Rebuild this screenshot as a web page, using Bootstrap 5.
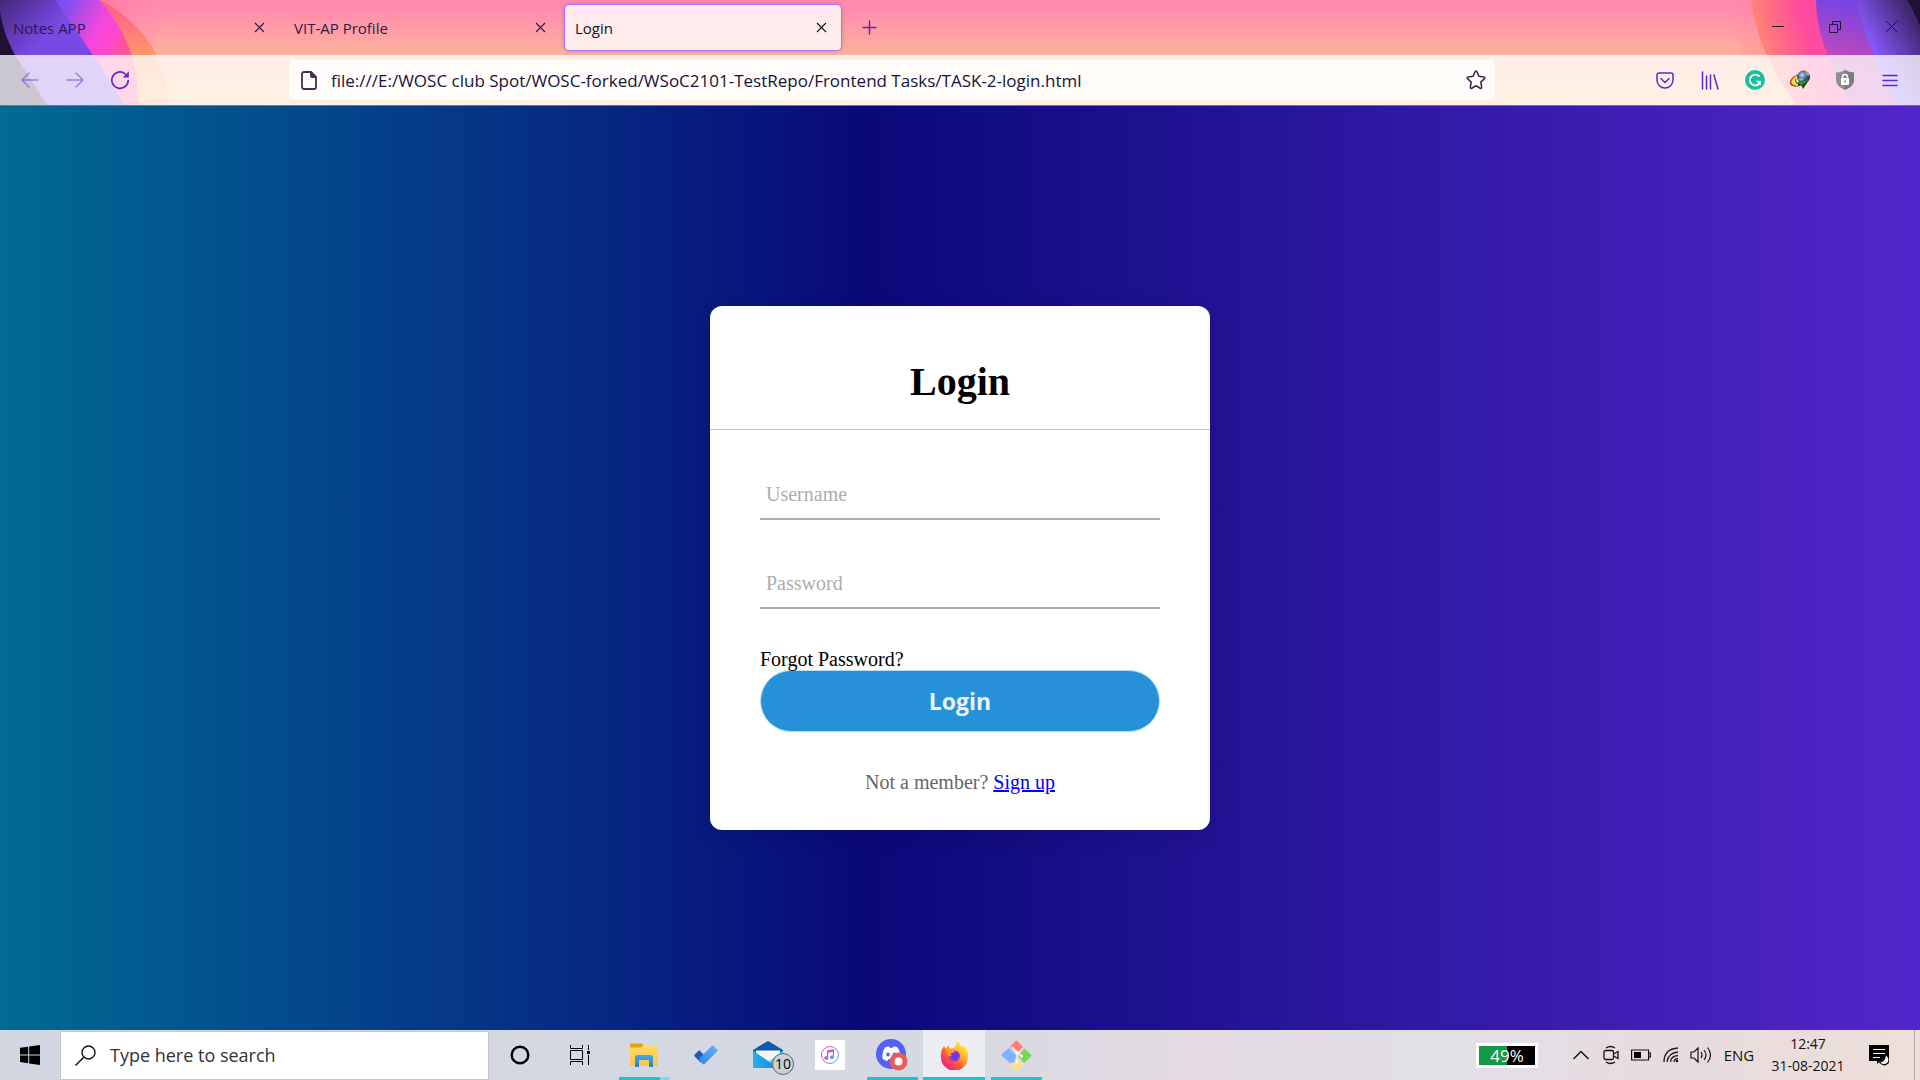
<!DOCTYPE html>
<html lang="en">
<head>
<meta charset="utf-8">
<meta name="viewport" content="width=device-width, initial-scale=1">
<title>Login</title>
<link href="https://cdn.jsdelivr.net/npm/bootstrap@5.3.0/dist/css/bootstrap.min.css" rel="stylesheet">
<style>
  body { font-family: "Open Sans", "Noto Sans", sans-serif; color: #15141a; }
  button { color: inherit; }
  .plain-btn { background: none; border: 0; padding: 0; display: flex; align-items: center; justify-content: center; flex-shrink: 0; }
  svg { display: block; flex-shrink: 0; }

  /* browser chrome */
  .chrome { background: linear-gradient(#ff8ab0 0, #ff8ab0 6px, #ffb29c 55px, #ffc086 105px); border-bottom: 1px solid #8d6f74; isolation: isolate; }
  .theme-art { position: absolute; top: 0; z-index: -1; }
  .theme-left { left: 0; }
  .theme-right { right: 0; }
  .tab-strip { height: 55px; font-size: 15px; color: #2b1a4a; }
  .page-tab { width: 281px; height: 47px; padding: 0 12px 0 13px; }
  .page-tab.before-current { margin-right: 2px; }
  .page-tab.current { width: 278px; padding: 0 10px; background: rgba(255,255,255,.8); border: 1px solid #ab71ff; border-radius: 5px; box-shadow: 0 0 4px rgba(128,80,128,.4); color: #15141a; }
  .tab-name { height: 45px; padding-top: 2px; }
  .tab-close { width: 20px; height: 20px; }
  .new-tab { width: 54px; height: 45px; color: #5a22c8; }
  .win-btn { width: 57px; height: 53px; color: #1d1133; }
  .tool-bar { height: 50px; background: rgba(255,255,255,.77); padding: 0 8px 0 7px; color: #5a28cf; }
  .tool-btn { width: 45px; height: 40px; }
  .flex-space { width: 147px; }
  .url-bar { height: 40px; background: rgba(255,255,255,.8); border-radius: 5px; color: #3b3155; padding: 0 9px 0 12px; }
  .url-input { border: 0; background: none; outline: 0; font-size: 17px; color: #15143a; padding: 2px 0 0 14px; }

  /* login page */
  .login-page { background: linear-gradient(90deg, #006b94 0, #090979 45%, #5326cb 100%); font-family: "Liberation Serif", serif; font-size: 20px; line-height: 24px; }
  .login-box { width: 500px; background: #fff; border-radius: 12px; box-shadow: 0 6px 20px rgba(0,0,0,.12); }
  .login-title { font-size: 40px; font-weight: 700; line-height: 48px; color: #000; padding: 52px 0 23px; border-bottom: 1px solid #c0c0c0; }
  .login-form { padding: 48px 50px 36px; }
  .line-input { height: 42px; border: 0; border-bottom: 2px solid #adadad; padding: 0 6px 8px; outline: 0; margin-bottom: 47px; }
  .line-input.last-line { margin-bottom: 39px; }
  .line-input::placeholder { color: #adadad; opacity: 1; }
  .forgot { line-height: 22px; }
  .login-btn { height: 62px; border-radius: 31px; border: 1px solid #bcdcf0; background: #2691d9; color: #e9f4fb; font: 700 23px "Open Sans", sans-serif; margin-bottom: 38px; }
  .signup { color: #666; }
  .signup a { color: #00f; }

  /* taskbar */
  .task-bar { height: 50px; background: linear-gradient(90deg, #d2d6e1 0, #d6d9e3 50%, #e4dae2 62%, #e2dfe7 75%, #e8dbdf 88%, #eedfd9 100%); color: #111; }
  .start-btn { width: 60px; height: 50px; color: #000; }
  .search-box { width: 429px; height: 49px; background: #fff; border: 1px solid #c8c8c8; padding-left: 14px; }
  .search-input { border: 0; outline: 0; background: none; font-size: 18px; padding: 0 0 0 14px; }
  .search-input::placeholder { color: #333; opacity: 1; }
  .app-btn { width: 62px; height: 50px; position: relative; }
  .app-btn.active-app { background: #edeef3; }
  .app-btn.open-app::after { content: ""; position: absolute; left: 6px; right: 5px; bottom: 0; height: 3px; background: #15c8ca; }
  .app-btn.active-app::after { left: 0; right: 0; }
  .app-btn.many-open::after { background: linear-gradient(90deg, #15c8ca 80%, #7adfe0 80%); }
  .count-badge { position: absolute; left: 35px; bottom: 5px; width: 22px; height: 22px; border: 1px solid #666; border-radius: 50%; background: #ccd0d6; font-size: 14px; line-height: 20px; color: #000; }
  .charge { width: 62px; height: 25px; border: 3px solid #fff; background: linear-gradient(90deg, #16984b 50%, #000 50%); color: #fff; font-size: 17px; line-height: 19px; margin-right: 28px; }
  .tray-btn { width: 30px; height: 50px; }
  .lang-btn { width: 46px; height: 50px; font-size: 15px; }
  .clock { width: 82px; font-size: 14px; line-height: 22px; margin: 0 20px 0 5px; }
  .desk-edge { width: 6px; height: 50px; border-left: 1px solid #b5acac; margin-left: 25px; }
</style>
</head>
<body class="vh-100 d-flex flex-column overflow-hidden">

<header class="chrome position-relative flex-shrink-0">
  <svg class="theme-art theme-left" width="180" height="105" viewBox="0 0 180 105" aria-hidden="true">
    <defs>
      <linearGradient id="glowL"><stop offset="0" stop-color="#ff6f97"/><stop offset="1" stop-color="#ff8ab0" stop-opacity="0"/></linearGradient>
      <linearGradient id="orangeL" x1="0" y1="0" x2="0" y2="1"><stop offset="0" stop-color="#ff5a8c"/><stop offset=".55" stop-color="#ff9a68"/><stop offset="1" stop-color="#ffb066"/></linearGradient>
      <linearGradient id="pinkL" gradientUnits="userSpaceOnUse" x1="62" y1="10" x2="125" y2="45"><stop offset="0" stop-color="#7d4fee"/><stop offset=".55" stop-color="#f247dd"/><stop offset=".8" stop-color="#ff47cf"/><stop offset="1" stop-color="#ff5599"/></linearGradient>
      <linearGradient id="violetL" gradientUnits="userSpaceOnUse" x1="4" y1="0" x2="45" y2="38"><stop offset="0" stop-color="#47297f"/><stop offset="1" stop-color="#7949e5"/></linearGradient>
    </defs>
    <path fill="url(#glowL)" opacity=".6" d="M100 0H168Q152 30 157 55Z"/>
    <path fill="url(#orangeL)" d="M0 0H100Q166 35 168 105H0Z"/>
    <path fill="url(#pinkL)" d="M0 0H99Q139 42 139 105H0Z"/>
    <path fill="url(#violetL)" d="M0 0H55L93 55L125 105H0Z"/>
    <path fill="#211036" d="M0 12Q4 36 15 55L47 105H0Z"/>
  </svg>
  <svg class="theme-art theme-right" width="200" height="105" viewBox="0 0 200 105" aria-hidden="true">
    <defs>
      <linearGradient id="glowR"><stop offset="0" stop-color="#ff7d92" stop-opacity="0"/><stop offset="1" stop-color="#ff7d92"/></linearGradient>
      <linearGradient id="bandR" gradientUnits="userSpaceOnUse" x1="38" y1="20" x2="80" y2="8"><stop offset="0" stop-color="#ff7f76"/><stop offset="1" stop-color="#ff4a9f"/></linearGradient>
      <linearGradient id="violetR" gradientUnits="userSpaceOnUse" x1="130" y1="0" x2="115" y2="60"><stop offset="0" stop-color="#7444e4"/><stop offset="1" stop-color="#c449b8"/></linearGradient>
      <linearGradient id="deepR" gradientUnits="userSpaceOnUse" x1="150" y1="42" x2="192" y2="18"><stop offset="0" stop-color="#8657fb"/><stop offset="1" stop-color="#42286f"/></linearGradient>
    </defs>
    <path fill="url(#glowR)" opacity=".5" d="M8 0H40L60 60H20Z"/>
    <path fill="url(#bandR)" d="M32 0Q36 50 76 105H200V0Z"/>
    <path fill="url(#violetR)" d="M96 0Q96 45 132 105H200V0Z"/>
    <path fill="url(#deepR)" d="M137 0Q142 35 176 105H200V0Z"/>
    <path fill="#211036" d="M187 0Q194 11 200 26V0Z"/>
  </svg>

  <div class="tab-strip d-flex align-items-start">
    <nav class="d-flex align-items-center pt-1" aria-label="Open tabs">
      <div class="page-tab d-flex align-items-center">
        <button class="plain-btn tab-name flex-grow-1 justify-content-start" type="button">Notes APP</button>
        <button class="plain-btn tab-close" type="button" aria-label="Close Notes APP"><svg width="11" height="11" viewBox="0 0 11 11" stroke="currentColor" stroke-width="1.100"><path d="M1 1l9 9M10 1l-9 9"/></svg></button>
      </div>
      <div class="page-tab before-current d-flex align-items-center">
        <button class="plain-btn tab-name flex-grow-1 justify-content-start" type="button">VIT-AP Profile</button>
        <button class="plain-btn tab-close" type="button" aria-label="Close VIT-AP Profile"><svg width="11" height="11" viewBox="0 0 11 11" stroke="currentColor" stroke-width="1.100"><path d="M1 1l9 9M10 1l-9 9"/></svg></button>
      </div>
      <div class="page-tab current d-flex align-items-center">
        <button class="plain-btn tab-name flex-grow-1 justify-content-start" type="button">Login</button>
        <button class="plain-btn tab-close" type="button" aria-label="Close Login"><svg width="11" height="11" viewBox="0 0 11 11" stroke="currentColor" stroke-width="1.100"><path d="M1 1l9 9M10 1l-9 9"/></svg></button>
      </div>
      <button class="plain-btn new-tab" type="button" aria-label="New tab"><svg width="15" height="15" viewBox="0 0 15 15" stroke="currentColor" stroke-width="1.400" stroke-linecap="round"><path d="M7.500 1v13M1 7.500h13"/></svg></button>
    </nav>
    <div class="d-flex ms-auto">
      <button class="plain-btn win-btn" type="button" aria-label="Minimise"><svg width="12" height="12" viewBox="0 0 12 12" stroke="currentColor"><path d="M0 5.500h12"/></svg></button>
      <button class="plain-btn win-btn" type="button" aria-label="Restore"><svg width="12" height="12" viewBox="0 0 12 12" fill="none" stroke="currentColor"><path d="M.5 3.500h8v8h-8zM3.500 3.500v-3h8v8h-3"/></svg></button>
      <button class="plain-btn win-btn" type="button" aria-label="Close"><svg width="13" height="13" viewBox="0 0 13 13" stroke="currentColor"><path d="M.5.5l12 12M12.500.5l-12 12"/></svg></button>
    </div>
  </div>

  <div class="tool-bar d-flex align-items-center">
    <button class="plain-btn tool-btn opacity-50" type="button" aria-label="Back"><svg width="18" height="16" viewBox="0 0 18 16" fill="none" stroke="currentColor" stroke-width="1.400" stroke-linecap="round" stroke-linejoin="round"><path d="M17 8H1M8 1L1 8l7 7"/></svg></button>
    <button class="plain-btn tool-btn opacity-50" type="button" aria-label="Forward"><svg width="18" height="16" viewBox="0 0 18 16" fill="none" stroke="currentColor" stroke-width="1.400" stroke-linecap="round" stroke-linejoin="round"><path d="M1 8h16M10 1l7 7-7 7"/></svg></button>
    <button class="plain-btn tool-btn" type="button" aria-label="Reload"><svg width="20" height="20" viewBox="0 0 20 20"><path fill="none" stroke="currentColor" stroke-width="1.700" stroke-linecap="round" d="M18.200 10.500a8.200 8.200 0 1 1-3-6.700"/><path fill="currentColor" d="M18.900 1.300v6.200h-6.200z"/></svg></button>
    <span class="flex-space"></span>
    <div class="url-bar d-flex align-items-center flex-grow-1">
      <svg width="16" height="19" viewBox="0 0 16 19"><path fill="none" stroke="currentColor" stroke-width="1.800" stroke-linejoin="round" d="M3 1h7l5 5v10a2 2 0 0 1-2 2H3a2 2 0 0 1-2-2V3a2 2 0 0 1 2-2z"/><path fill="currentColor" d="M9 1l6.500 6H11a2 2 0 0 1-2-2z"/></svg>
      <input class="url-input flex-grow-1" type="text" aria-label="Address" value="file:///E:/WOSC club Spot/WOSC-forked/WSoC2101-TestRepo/Frontend Tasks/TASK-2-login.html">
      <button class="plain-btn" type="button" aria-label="Bookmark this page"><svg width="20" height="20" viewBox="0 0 20 20" fill="none" stroke="currentColor" stroke-width="1.600" stroke-linejoin="round"><path d="M9.100 1.700q.9-1.300 1.800 0l2.100 4.600 5 .7q1.500.4.5 1.600l-3.700 3.500.9 5.200q-.1 1.500-1.500 1L10 15.700l-4.200 2.600q-1.400.5-1.500-1l.9-5.200L1.500 8.600Q.5 7.400 2 7l5-.7z"/></svg></button>
    </div>
    <span class="flex-space"></span>
    <button class="plain-btn tool-btn" type="button" aria-label="Save to Pocket"><svg width="18" height="17" viewBox="0 0 18 17" fill="none" stroke="currentColor" stroke-width="1.500" stroke-linecap="round" stroke-linejoin="round"><path d="M3 1h12a2 2 0 0 1 2 2v5a8 8 0 0 1-16 0V3a2 2 0 0 1 2-2zM5 6.500l4 4 4-4"/></svg></button>
    <button class="plain-btn tool-btn" type="button" aria-label="Library"><svg width="18" height="19" viewBox="0 0 18 19" fill="none" stroke="currentColor" stroke-width="1.500" stroke-linecap="round"><path d="M1.500 1v17M5.500 5v13M9.500 4v14M13 4l4 14"/></svg></button>
    <button class="plain-btn tool-btn" type="button" aria-label="Grammarly"><svg width="20" height="20" viewBox="0 0 20 20"><circle cx="10" cy="10" r="10" fill="#15c39a"/><path fill="none" stroke="#fff" stroke-width="1.900" d="M14.500 6.600A5.400 5.400 0 1 0 14.400 13.600"/><path fill="#fff" d="M10.600 10.800h5.200v4.500l-1.800-1.300z"/></svg></button>
    <button class="plain-btn tool-btn" type="button" aria-label="Download manager"><svg width="20" height="20" viewBox="0 0 20 20"><defs><radialGradient id="globe" cx=".4" cy=".35" r=".7"><stop offset="0" stop-color="#c5d9ed"/><stop offset=".45" stop-color="#3f6cae"/><stop offset="1" stop-color="#101f48"/></radialGradient></defs><path fill="none" stroke="#d63520" stroke-width="1.600" d="M8 16Q-1 16 1 11t9-6"/><path fill="none" stroke="#f3e324" stroke-width="2.200" d="M8 15Q1 14 3.500 10T11 6"/><path fill="none" stroke="#24a72d" stroke-width="1.500" d="M9 14Q4 12 6 9"/><circle cx="13.500" cy="7" r="6.500" fill="url(#globe)"/><path fill="#c9b232" d="M15 1q4 1 4.500 5l-3-1zM8 9l4-1 2 2-4 1z"/><path fill="#0f4f17" d="M8 12.500l11-2.500-6 9-1.500-3.500-3.500.5z"/><path fill="#2f9a38" d="M8 12.500l11-2.500-7.500 5z"/></svg></button>
    <button class="plain-btn tool-btn" type="button" aria-label="Privacy shield"><svg width="18" height="20" viewBox="0 0 18 20"><path fill="#8e8e8e" d="M9 0q5 2.800 9 2.500V10q0 6-9 10Q0 16 0 10V2.500Q4 2.800 9 0z"/><path fill="#7c7c7c" d="M9 0q5 2.800 9 2.500V10q0 6-9 10z"/><rect x="5" y="8" width="8" height="7" rx="1" fill="#fff"/><path fill="none" stroke="#fff" stroke-width="1.400" d="M6.500 9V7a2.500 2.500 0 0 1 5 0v2"/><circle cx="9" cy="11.500" r="1" fill="#777"/></svg></button>
    <button class="plain-btn tool-btn" type="button" aria-label="Menu"><svg width="16" height="13" viewBox="0 0 16 13" stroke="currentColor" stroke-width="1.500" stroke-linecap="round"><path d="M1 1.500h14M1 6.500h14M1 11.500h14"/></svg></button>
  </div>
</header>

<main class="login-page flex-grow-1 d-flex align-items-center justify-content-center">
  <section class="login-box">
    <h1 class="login-title text-center m-0">Login</h1>
    <form class="login-form" onsubmit="return false">
      <input class="line-input w-100 d-block" type="text" placeholder="Username" aria-label="Username">
      <input class="line-input last-line w-100 d-block" type="password" placeholder="Password" aria-label="Password">
      <a class="forgot d-block text-black text-decoration-none" href="#">Forgot Password?</a>
      <button class="login-btn d-block w-100" type="submit">Login</button>
      <p class="signup text-center m-0">Not a member? <a href="#">Sign up</a></p>
    </form>
  </section>
</main>

<footer class="task-bar d-flex align-items-center flex-shrink-0">
  <button class="plain-btn start-btn" type="button" aria-label="Start"><svg width="20" height="20" viewBox="0 0 20 20" fill="currentColor"><path d="M0 2.800l8.200-1.100v7.700H0zM9.200 1.500L20 0v9.400H9.200zM0 10.500h8.200v7.700L0 17.100zM9.200 10.500H20V20L9.200 18.400z"/></svg></button>
  <label class="search-box d-flex align-items-center">
    <svg width="21" height="21" viewBox="0 0 21 21" fill="none" stroke="#111" stroke-width="1.400"><circle cx="13.500" cy="7.500" r="6.500"/><path d="M9 12L.5 20.500"/></svg>
    <input class="search-input flex-grow-1" type="text" placeholder="Type here to search" aria-label="Type here to search">
  </label>
  <nav class="d-flex" aria-label="Apps">
    <button class="plain-btn app-btn" type="button" aria-label="Cortana"><svg width="20" height="20" viewBox="0 0 20 20"><circle cx="10" cy="10" r="8.300" fill="none" stroke="#000" stroke-width="2.400"/></svg></button>
    <button class="plain-btn app-btn" type="button" aria-label="Task view"><svg width="24" height="20" viewBox="0 0 24 20" fill="none" stroke="#000"><path d="M.5 0v3.500h12V0M.5 5.500h12v9H.5zM.5 20v-3.500h12V20M18.500 0v5M18.500 10v10"/><path fill="#000" stroke="none" d="M17 6h3v3h-3z"/></svg></button>
    <button class="plain-btn app-btn open-app many-open" type="button" aria-label="File Explorer"><svg width="28" height="24" viewBox="0 0 28 24"><defs><linearGradient id="folder" x2="0" y2="1"><stop offset="0" stop-color="#ffd968"/><stop offset="1" stop-color="#f9c74b"/></linearGradient><linearGradient id="stand" x2="0" y2="1"><stop offset="0" stop-color="#45a9e8"/><stop offset="1" stop-color="#2c80c4"/></linearGradient></defs><path fill="#e5a10b" d="M0 1.500Q0 .5 1 .5h11l1.500 1.500L12 5H0z"/><path fill="url(#folder)" d="M0 4.500h11L14 2h13q1 0 1 1v19q0 1-1 1H1q-1 0-1-1z"/><path fill="url(#stand)" d="M5 14q0-2 2-2h14q2 0 2 2v10h-4v-7H9v7H5z"/></svg></button>
    <button class="plain-btn app-btn" type="button" aria-label="To Do"><svg width="24" height="20" viewBox="0 0 24 20"><defs><linearGradient id="tick" x1="0" y1="1" x2="1" y2="0"><stop offset="0" stop-color="#3383e8"/><stop offset="1" stop-color="#5cb5ff"/></linearGradient></defs><path fill="#1e5bb8" d="M.7 9.600L4.500 5.700q.7-.6 1.400 0L12 12l-5.500 5.500-5.800-6q-.8-1 0-1.900z"/><path fill="url(#tick)" d="M5.500 13.300L18 .8q.7-.6 1.400 0l3.900 3.900q.7.8 0 1.500L10.500 19q-.9.900-1.800 0l-3.200-3.800q-.8-1 0-1.900z"/></svg></button>
    <button class="plain-btn app-btn" type="button" aria-label="Mail, 10 new"><svg width="30" height="28" viewBox="0 0 30 28"><defs><linearGradient id="mail"><stop offset="0" stop-color="#2aaef0"/><stop offset="1" stop-color="#1587d6"/></linearGradient></defs><path fill="#0b5cad" d="M0 9L14 .5q1-.7 2 0L30 9v8H0z"/><path fill="#f4f6f8" d="M3 9.500h24V16l-12 6L3 14z"/><path fill="#3ccdf7" d="M30 9.500V27H8z"/><path fill="url(#mail)" d="M0 9.500l25 17.500H0z"/></svg><span class="count-badge">10</span></button>
    <button class="plain-btn app-btn" type="button" aria-label="iTunes"><svg width="30" height="30" viewBox="0 0 30 30"><defs><linearGradient id="tune" x1="0" y1="0" x2="1" y2="1"><stop offset="0" stop-color="#ff5a72"/><stop offset=".5" stop-color="#b75ad8"/><stop offset="1" stop-color="#35bfee"/></linearGradient></defs><path fill="#fff" d="M0 0h30v30H0z"/><circle cx="15" cy="15" r="8.500" fill="none" stroke="url(#tune)"/><path fill="url(#tune)" d="M12 10.500l7-1.500v8.200a2 1.700 0 1 1-1.200-1.500v-4l-4.600 1v5.500a2 1.700 0 1 1-1.200-1.600z"/></svg></button>
    <button class="plain-btn app-btn open-app" type="button" aria-label="Discord"><svg width="32" height="32" viewBox="0 0 32 32"><circle cx="15" cy="15" r="15" fill="#5562f0"/><path fill="#fff" d="M9 8.500q2-1 4-1l.7 1.200h3.200l.7-1.200q2 0 4 1 3 4.500 2.800 11-2 2-5 2.500l-1-2q-3 .8-6 0l-1 2q-3-.5-5-2.500Q6 13 9 8.500z"/><ellipse cx="12" cy="15.500" rx="1.800" ry="2" fill="#5562f0"/><ellipse cx="18.500" cy="15.500" rx="1.800" ry="2" fill="#5562f0"/><circle cx="22.500" cy="22.500" r="9" fill="#ee5a5c"/><circle cx="22.500" cy="22.500" r="4" fill="#fff"/></svg></button>
    <button class="plain-btn app-btn open-app active-app" type="button" aria-label="Firefox"><svg width="29" height="29" viewBox="0 0 29 29"><defs><linearGradient id="fox" x1=".85" y1=".1" x2=".2" y2=".9"><stop offset="0" stop-color="#fff04a"/><stop offset=".35" stop-color="#ffb42d"/><stop offset=".65" stop-color="#ff5c35"/><stop offset="1" stop-color="#f0207c"/></linearGradient><radialGradient id="orb"><stop offset="0" stop-color="#5641cf"/><stop offset="1" stop-color="#9b35df"/></radialGradient></defs><path fill="url(#fox)" d="M4 5q1 2 2 2.500 1-2 3-3v3h3q3-.5 4-3 0-3 3-4.500 0 4 4 6l1-1.500q5 5 4 12A13.500 13.500 0 0 1 1 16Q0 10 4 5z"/><circle cx="14.500" cy="15" r="5.500" fill="url(#orb)"/><path fill="#ff9a2b" d="M6 9q3-2 6-.5l3 1.500q-1 2-4 2-1 2 1 3-5 1-6-6z"/></svg></button>
    <button class="plain-btn app-btn open-app" type="button" aria-label="Git"><svg width="31" height="31" viewBox="0 0 31 31"><path fill="#ff7f7c" d="M9 7l5.500-6q1-1 2 0L22 7l-5 5-2-1-2-3-2 1z"/><path fill="#7eb1ff" d="M8 8l7 7-1 7-5 1-8-7q-1-1 0-2z"/><path fill="#80d15c" d="M23.500 8.500l6.500 6q1 1 0 2l-7 6.500-6-7z"/><path fill="#ffe27d" d="M15 17l7 7-5.500 6q-1 1-2 0L8.500 24l5-1z"/><path fill="none" stroke="#f3e8e8" stroke-width="1.500" d="M11 7l5 5v12M16 12l5 5"/><circle cx="16" cy="12.500" r="1.500" fill="#fff"/><circle cx="20.500" cy="16" r="1.500" fill="#fff"/><circle cx="16" cy="21" r="1.500" fill="#fff"/></svg></button>
  </nav>
  <div class="d-flex align-items-center ms-auto">
    <div class="charge text-center">49%</div>
    <button class="plain-btn tray-btn" type="button" aria-label="Show hidden icons"><svg width="16" height="10" viewBox="0 0 16 10" fill="none" stroke="#111" stroke-width="1.400"><path d="M.5 9L8 1.500 15.500 9"/></svg></button>
    <button class="plain-btn tray-btn" type="button" aria-label="Meet Now"><svg width="16" height="20" viewBox="0 0 16 20" fill="none" stroke="#111" stroke-width="1.300"><path d="M3 3q4.500-3 9 0M3 17q4.500 3 9 0"/><rect x="1" y="5.500" width="9.500" height="9" rx="1.500"/><path d="M10.500 9L15 6.500v7L10.500 11"/></svg></button>
    <button class="plain-btn tray-btn" type="button" aria-label="Battery"><svg width="20" height="12" viewBox="0 0 20 12"><path fill="none" stroke="#111" stroke-width="1.200" d="M.6 1h17v10H.6zM18 4h1.500v4H18"/><path d="M3 3h7v6H3z"/></svg></button>
    <button class="plain-btn tray-btn" type="button" aria-label="Network"><svg width="16" height="16" viewBox="0 0 16 16" fill="none" stroke="#222" stroke-width="1.300"><path d="M1 15Q1 2 15 1M4 15Q5 6 15 5M7.500 15Q8 9 15 8.500M11 15q0-3 4-3.500"/><circle cx="14" cy="14" r="1.200" fill="#111" stroke="none"/></svg></button>
    <button class="plain-btn tray-btn" type="button" aria-label="Volume"><svg width="22" height="18" viewBox="0 0 22 18" fill="none" stroke="#111" stroke-width="1.200"><path d="M1 6h3l4-4v14l-4-4H1zM11 6q2 3 0 6M14 4q4 5 0 10M17.500 1.500q6 7.500 0 15"/></svg></button>
    <button class="plain-btn lang-btn" type="button">ENG</button>
    <div class="clock text-center">12:47<br>31-08-2021</div>
    <button class="plain-btn" type="button" aria-label="Notifications"><svg width="20" height="21" viewBox="0 0 20 21"><path d="M0 0h20v16h-9l-3 3v-3H0z"/><path stroke="#fff" stroke-width="1.200" d="M4 4.500h12M4 8.500h12M4 12.500h7"/><path fill="#fff" stroke="#111" stroke-width="1.300" d="M16.500 10a5 5 0 1 1-6 7q5 0 6-7z"/></svg></button>
    <div class="desk-edge"></div>
  </div>
</footer>

<script src="https://cdn.jsdelivr.net/npm/bootstrap@5.3.0/dist/js/bootstrap.bundle.min.js"></script>
</body>
</html>
